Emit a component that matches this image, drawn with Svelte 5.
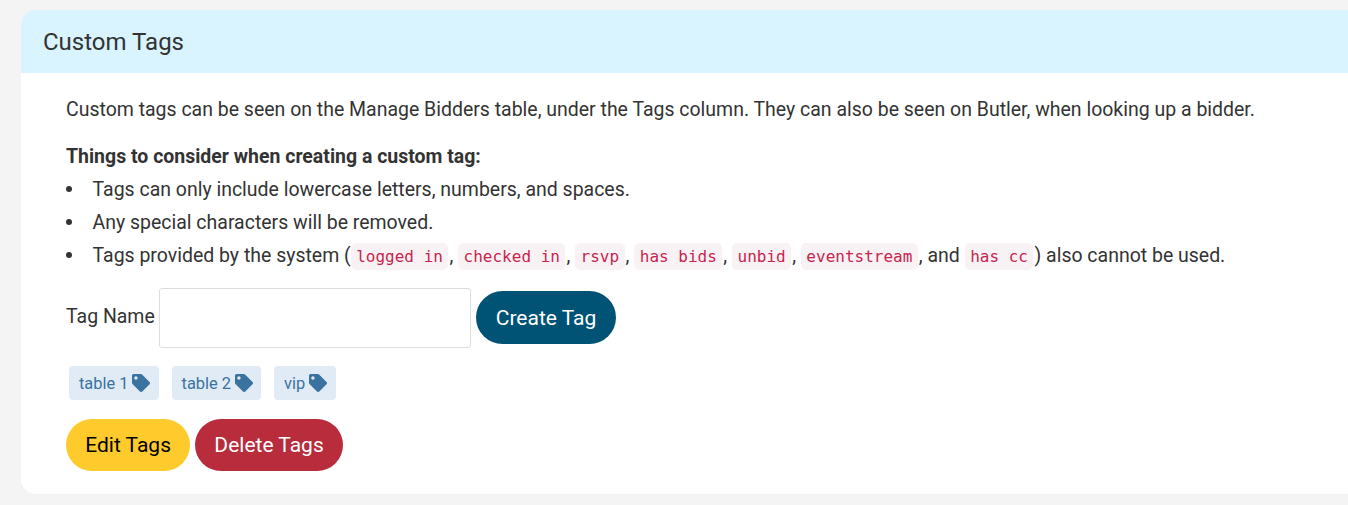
<script>
const codes = ["logged in", "checked in", "rsvp", "has bids", "unbid", "eventstream"];
const tags = ["table 1", "table 2", "vip"];
</script>

<div class="card">
	<h2 class="head">Custom Tags</h2>
	<div class="body">
		<p class="intro">Custom tags can be seen on the Manage Bidders table, under the Tags column. They can also be seen on Butler, when looking up a bidder.</p>
		<p class="lead"><b>Things to consider when creating a custom tag:</b></p>
		<ul>
			<li>Tags can only include lowercase letters, numbers, and spaces.</li>
			<li>Any special characters will be removed.</li>
			<li>Tags provided by the system ({#each codes as c}<code>{c}</code>{", "}{/each}and <code>has cc</code>) also cannot be used.</li>
		</ul>
		<form class="create">
			<label for="tag">Tag Name</label>
			<input id="tag" type="text" />
			<button type="button" class="btn blue">Create Tag</button>
		</form>
		<div class="tags">
			{#each tags as t}
				<span class="tag">{t}
					<svg viewBox="0 0 512 512" width="18" height="18"><path fill="currentColor" d="M0 252.118V48C0 21.49 21.49 0 48 0h204.118a48 48 0 0 1 33.941 14.059l211.882 211.882c18.745 18.745 18.745 49.137 0 67.882L293.823 497.941c-18.745 18.745-49.137 18.745-67.882 0L14.059 286.059A48 48 0 0 1 0 252.118zM112 64c-26.51 0-48 21.49-48 48s21.49 48 48 48 48-21.49 48-48-21.49-48-48-48z"/></svg>
				</span>
			{/each}
		</div>
		<div class="actions">
			<button type="button" class="btn yellow">Edit Tags</button>
			<button type="button" class="btn red">Delete Tags</button>
		</div>
	</div>
</div>

<style>
:global(body) {
	background: #f4f4f4;
	overflow: hidden;
	font-family: Roboto, sans-serif;
	font-size: 19.48px;
	line-height: 27px;
	color: #333;
}

.card {
	width: 1400px;
	margin: 10px 0 0 21px;
	background: #fff;
	border-radius: 15px;
	overflow: hidden;
}

.head {
	margin: 0;
	height: 63px;
	padding: 0 22px;
	background: #d9f3ff;
	font-size: 24px;
	font-weight: 400;
	line-height: 65px;
}

.body {
	padding: 23px 45px 23px;
}

p {
	margin: 0;
}

.lead {
	margin-top: 20px;
}

b {
	font-weight: 700;
}

ul {
	margin: 3px 0 0;
	padding: 0;
	list-style: none;
}

li {
	line-height: 33px;
}

li::before {
	content: "";
	display: inline-block;
	width: 6px;
	height: 6px;
	margin: 0 20.5px 3px 0;
	border-radius: 50%;
	background: #333;
	vertical-align: middle;
}

code {
	font-family: "DejaVu Sans Mono", monospace;
	font-size: 16px;
	color: #c7254e;
	background: #f8f2f4;
	padding: 4px 5.5px;
	margin-right: 1px;
	border-radius: 5px;
}

.create {
	display: flex;
	align-items: center;
	gap: 5px;
	margin-top: 15px;
}

label {
	margin: 0 -1px 4px 0;
}

input {
	width: 312px;
	height: 60px;
	box-sizing: border-box;
	border: 1px solid #ddd;
	border-radius: 3px;
	background: #fff;
}

.btn {
	border: none;
	border-radius: 27px;
	height: 53px;
	padding: 0 20px;
	font-family: Roboto, sans-serif;
	font-size: 21px;
}

.blue {
	background: #005375;
	color: #fff;
	margin-bottom: 1px;
}

.yellow {
	background: #ffca2c;
	color: #000;
}

.red {
	background: #b82c3c;
	color: #fff;
}

.tags {
	display: flex;
	gap: 12.6px;
	margin: 18px 0 0 3px;
}

.tag {
	display: flex;
	align-items: center;
	gap: 4px;
	height: 34px;
	padding: 0 8.5px 0 10px;
	background: #e0ebf5;
	border-radius: 4px;
	color: #3a72a0;
	font-size: 16.4px;
}

.actions {
	display: flex;
	gap: 5px;
	margin-top: 19px;
}

.actions .btn {
	height: 52px;
	padding: 0 19.2px;
}
</style>
